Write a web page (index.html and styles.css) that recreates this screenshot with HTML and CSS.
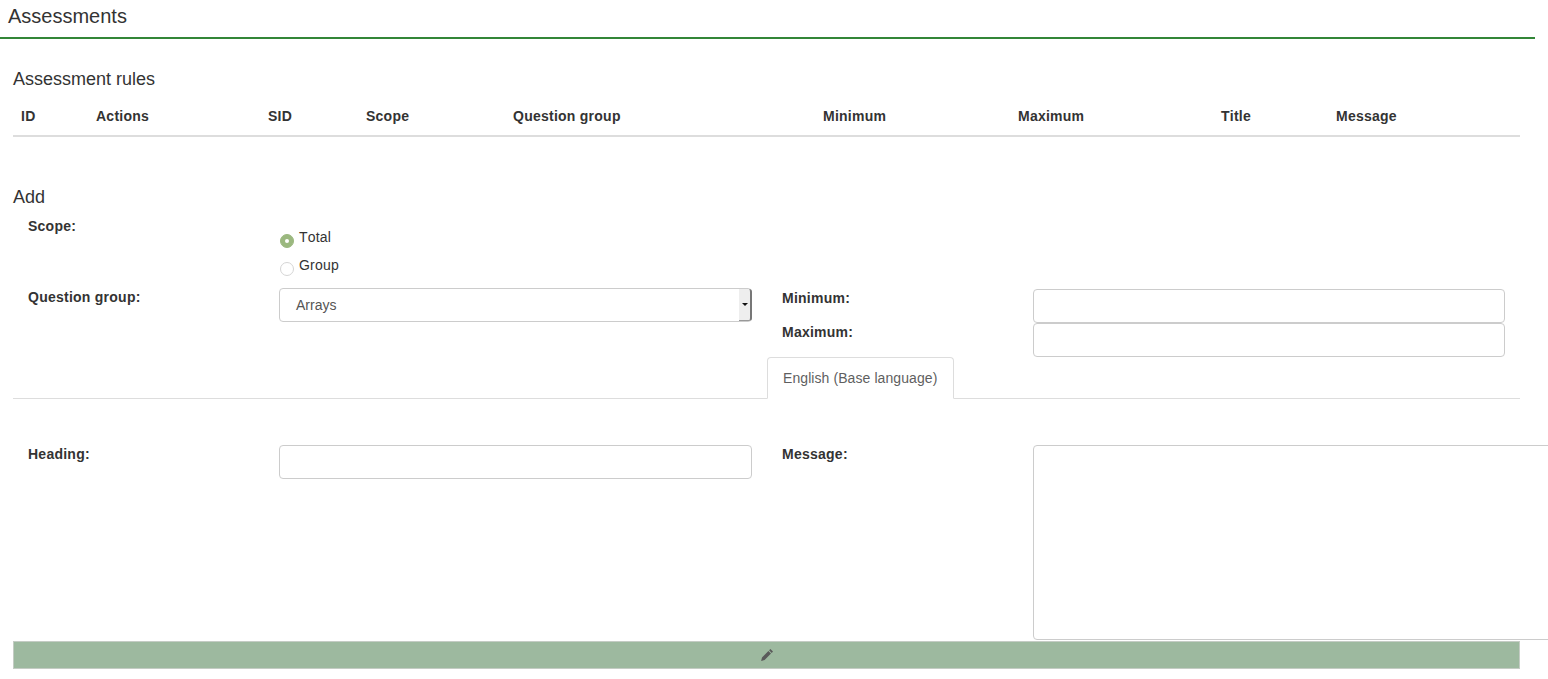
FILE: index.html
```html
<!DOCTYPE html>
<html lang="en">
<head>
<meta charset="utf-8">
<title>Assessments</title>
<link rel="stylesheet" href="styles.css">
</head>
<body>
<div class="page">
  <header class="title-bar"><h1 class="title">Assessments</h1></header>
  <main class="content">
    <h2 class="section-title rules-title">Assessment rules</h2>
    <div class="table-head">
      <span>ID</span><span>Actions</span><span>SID</span><span>Scope</span><span>Question group</span><span>Minimum</span><span>Maximum</span><span>Title</span><span>Message</span>
    </div>
    <h2 class="section-title add-title">Add</h2>
    <div class="scope-row">
      <label class="label">Scope:</label>
      <div class="radios">
        <div class="radio-row"><span class="radio radio-on"></span><span>Total</span></div>
        <div class="radio-row"><span class="radio"></span><span>Group</span></div>
      </div>
    </div>
    <div class="group-row">
      <label class="label">Question group:</label>
      <div class="select"><span>Arrays</span><span class="select-btn"><span class="caret"></span></span></div>
      <div class="minmax">
        <div class="minmax-row"><label class="label">Minimum:</label><input class="input" type="text"></div>
        <div class="minmax-row"><label class="label">Maximum:</label><input class="input" type="text"></div>
      </div>
    </div>
    <div class="tabs"><div class="tab">English (Base language)</div></div>
    <div class="lang-row">
      <label class="label">Heading:</label>
      <input class="input heading-input" type="text">
      <label class="label message-label">Message:</label>
      <textarea class="message"></textarea>
    </div>
    <div class="save-bar">
      <svg class="pencil" width="14" height="14" viewBox="0 0 14 14"><path d="M10.4 1 13 3.6 11.7 4.9 9.1 2.3ZM8.4 3 11 5.6 4.6 12 1.1 12.9 2 9.4Z" fill="#5a5a5a"/></svg>
    </div>
  </main>
</div>
</body>
</html>
```
FILE: styles.css
```css
* { box-sizing: border-box; }
html, body { margin: 0; padding: 0; background: #fff; overflow: hidden; }
body { font-family: "Liberation Sans", Arial, sans-serif; font-size: 14px; color: #333; width: 1548px; height: 679px; font-kerning: none; }
.title-bar { width: 1535px; height: 39px; border-bottom: 2px solid #328637; padding: 6px 0 0 8px; }
.title { margin: 0; font-size: 20px; line-height: 20px; font-weight: 400; color: #333; }
.content { padding: 0 28px 0 13px; width: 1533px; }
.section-title { margin: 0; font-size: 18px; line-height: 20px; font-weight: 400; color: #333; }
.rules-title { padding-top: 30px; }
.table-head { display: grid; grid-template-columns: 75px 172px 98px 147px 310px 195px 203px 115px 192px; height: 41px; padding: 10px 0 0 8px; margin-top: 7px; width: 1507px; border-bottom: 2px solid #ddd; font-weight: 700; line-height: 20px; color: #333; letter-spacing: 0.25px; }
.table-head span { white-space: nowrap; }
.add-title { margin-top: 50px; }
.label { display: block; font-weight: 700; line-height: 20px; white-space: nowrap; color: #333; letter-spacing: 0.25px; }
.scope-row { display: grid; grid-template-columns: 251px 1fr; padding-left: 15px; margin-top: 9px; height: 72px; }
.radios { display: flex; flex-direction: column; padding-top: 11px; gap: 8px; letter-spacing: 0.2px; }
.radio-row { display: flex; height: 20px; line-height: 20px; gap: 5px; }
.radio { width: 14px; height: 14px; border-radius: 50%; border: 1px solid #d5d5d5; margin: 7px 0 0 1px; flex: none; background: #fff; }
.radio-on { background: #9bb87f; border-color: #9bb87f; position: relative; }
.radio-on::after { content: ""; position: absolute; left: 4px; top: 4px; width: 4px; height: 4px; border-radius: 50%; background: #fff; }
.group-row { display: grid; grid-template-columns: 251px 473px 30px 251px 472px; padding-left: 15px; height: 70px; }
.group-row > .label { margin-top: -1px; }
.select { grid-column: 2; height: 34px; border: 1px solid #ccc; border-radius: 4px; padding: 0 16px; line-height: 32px; color: #555; display: flex; justify-content: space-between; position: relative; }
.select-btn { position: absolute; right: -1px; top: 0; bottom: 0; width: 13px; background: #eee; border-right: 2px solid #777; border-bottom: 1px solid #999; border-radius: 0 3px 3px 0; display: flex; align-items: center; justify-content: center; }
.caret { width: 0; height: 0; border-left: 3px solid transparent; border-right: 3px solid transparent; border-top: 3px solid #111; }
.minmax { grid-column: 4 / 6; display: flex; flex-direction: column; gap: 0; margin-top: 1px; }
.minmax-row { display: grid; grid-template-columns: 251px 472px; height: 34px; }
.minmax-row .label { margin-top: -1px; }
.input { height: 34px; border: 1px solid #ccc; border-radius: 4px; background: #fff; padding: 0; margin: 0; display: block; width: 100%; }
.tabs { height: 42px; margin-top: -1px; margin-right: 0; width: 1507px; border-bottom: 1px solid #ddd; padding-left: 754px; }
.tab { width: 187px; height: 42px; border: 1px solid #ddd; border-bottom-color: #fff; border-radius: 4px 4px 0 0; background: #fff; padding: 0 15px; line-height: 41px; color: #5f5f5f; white-space: nowrap; letter-spacing: 0.08px; }
.lang-row { display: grid; grid-template-columns: 251px 473px 30px 251px 515px; padding-left: 15px; margin-top: 46px; height: 195px; width: 1535px; }
.lang-row .label { margin-top: -1px; }
.heading-input { width: 473px; }
.message-label { grid-column: 4; }
.message { grid-column: 5; display: block; width: 560px; height: 195px; border: 1px solid #ccc; border-radius: 4px; background: #fff; padding: 0; margin: 0; resize: none; }
.save-bar { width: 1507px; height: 28px; margin-top: 1px; background: #9db99f; border: 1px solid #c4ccc4; display: flex; align-items: center; justify-content: center; }
```
